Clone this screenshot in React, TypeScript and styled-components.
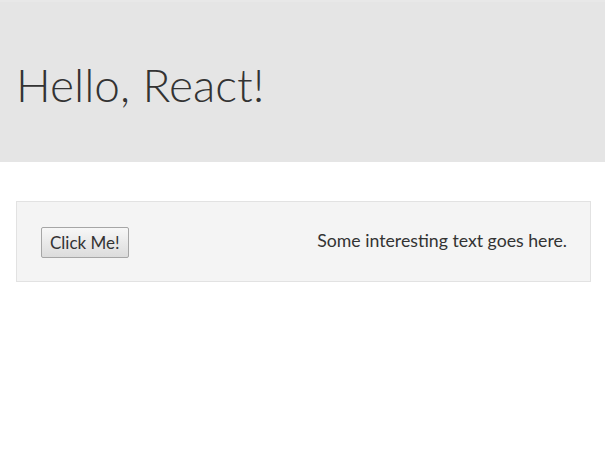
import React from 'react'
import styled, { createGlobalStyle } from 'styled-components'

const GlobalStyle = createGlobalStyle`
  html, body {
    margin: 0;
    padding: 0;
    background: #fff;
    font-family: 'Lato', 'Open Sans', sans-serif;
    color: #333;
  }
`

const Header = styled.header`
  height: 162px;
  box-sizing: border-box;
  background-color: #e5e5e5;
  border-top: 2px solid #e8e8e8;
  padding: 0 16px;
  display: flex;
  align-items: center;
`

const Title = styled.h1`
  margin: 4px 0 0;
  font-size: 46px;
  font-weight: 300;
  color: #333;
`

const Main = styled.main`
  padding: 39px 14px 0 16px;
`

const Card = styled.div`
  height: 81px;
  box-sizing: border-box;
  background-color: #f4f4f4;
  border: 1px solid #e2e2e2;
  padding: 0 23px 0 24px;
  display: flex;
  align-items: center;
  justify-content: space-between;
`

const Button = styled.button`
  height: 31px;
  padding: 0 8px;
  font-family: inherit;
  font-size: 17px;
  color: #333;
  background: linear-gradient(#f7f7f7, #dcdcdc);
  border: 1px solid #a6a6a6;
  border-radius: 2px;
  margin-top: 1px;
`

const Text = styled.span`
  font-size: 17.7px;
  color: #333;
  margin-top: -2px;
`

const App = () => {
  return (
    <>
      <GlobalStyle />
      <Header>
        <Title>Hello, React!</Title>
      </Header>
      <Main>
        <Card>
          <Button>Click Me!</Button>
          <Text>Some interesting text goes here.</Text>
        </Card>
      </Main>
    </>
  )
}

export default App
